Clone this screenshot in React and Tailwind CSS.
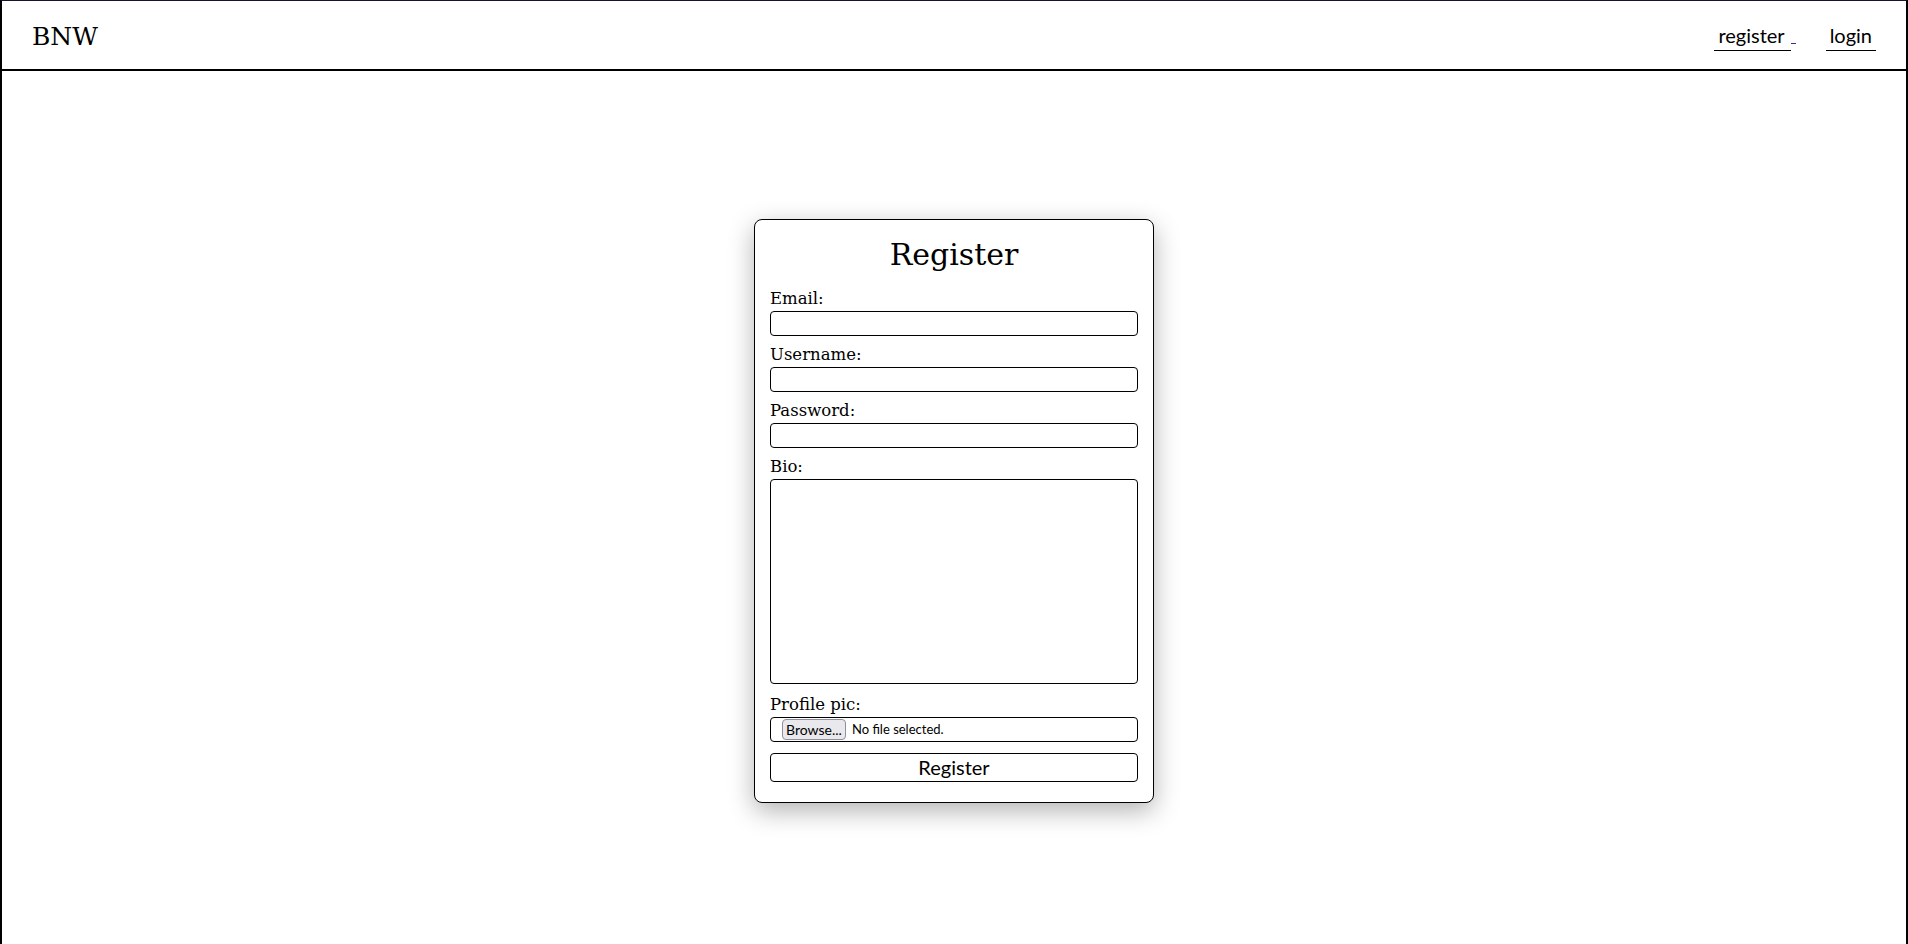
import React from "react";

function Field({ label, children }) {
  return (
    <div>
      <label className="block text-[16.5px] leading-[20px] mb-[2px] text-black">{label}</label>
      {children}
    </div>
  );
}

export default function App() {
  return (
    <div className="min-h-screen bg-white border-t border-t-[#15152e] border-x-2 border-x-black flex flex-col">
      <header className="h-[70px] border-b-2 border-black flex items-center justify-between pl-[30px] pr-[30px]">
        <div className="pt-[3px] font-['DejaVu_Serif',serif] text-[25px] text-black">BNW</div>
        <nav className="pt-[3px] flex items-baseline font-['Lato',sans-serif] text-[20px] text-black">
          <a href="#" className="inline-block pl-[4px] pr-[6px] pb-[3px] leading-[24px] border-b border-black">register</a>
          <span className="inline-block w-[5px] h-[1px] bg-[#3b2a9e] translate-y-[1px] mr-[30px]"></span>
          <a href="#" className="inline-block px-[4px] pb-[3px] leading-[24px] border-b border-black">login</a>
        </nav>
      </header>
      <main className="flex justify-center pt-[148px]">
        <div className="w-[400px] bg-white border border-black rounded-[8px] shadow-[0_8px_26px_rgba(0,0,0,0.3)] px-[15px] pt-[15px] pb-[20px] font-['DejaVu_Serif',serif] text-black">
          <h1 className="mt-[2px] mb-[17px] text-center text-[30px] leading-[35px] font-normal">Register</h1>
          <Field label="Email:">
            <input type="email" className="block w-full h-[25px] mb-[9px] border border-black rounded-[4px] bg-white outline-none" />
          </Field>
          <Field label="Username:">
            <input type="text" className="block w-full h-[25px] mb-[9px] border border-black rounded-[4px] bg-white outline-none" />
          </Field>
          <Field label="Password:">
            <input type="password" className="block w-full h-[25px] mb-[9px] border border-black rounded-[4px] bg-white outline-none" />
          </Field>
          <Field label="Bio:">
            <textarea className="block w-full h-[205px] mb-[11px] border border-black rounded-[4px] bg-white outline-none resize-none" />
          </Field>
          <Field label="Profile pic:">
            <div className="flex items-center h-[25px] mb-[11px] border border-black rounded-[4px] pl-[11px] font-['Lato',sans-serif] text-[13px]">
              <span className="inline-flex items-center justify-center w-[64px] h-[21px] bg-[#e9e9ed] border border-[#8f8f9d] rounded-[4px] text-[14px] text-black">Browse...</span>
              <span className="ml-[6px] text-[13px] text-black">No file selected.</span>
            </div>
          </Field>
          <button type="button" className="block w-full h-[29px] border border-black rounded-[4px] bg-white font-['Lato',sans-serif] text-[20px] leading-[27px] text-black">Register</button>
        </div>
      </main>
    </div>
  );
}
